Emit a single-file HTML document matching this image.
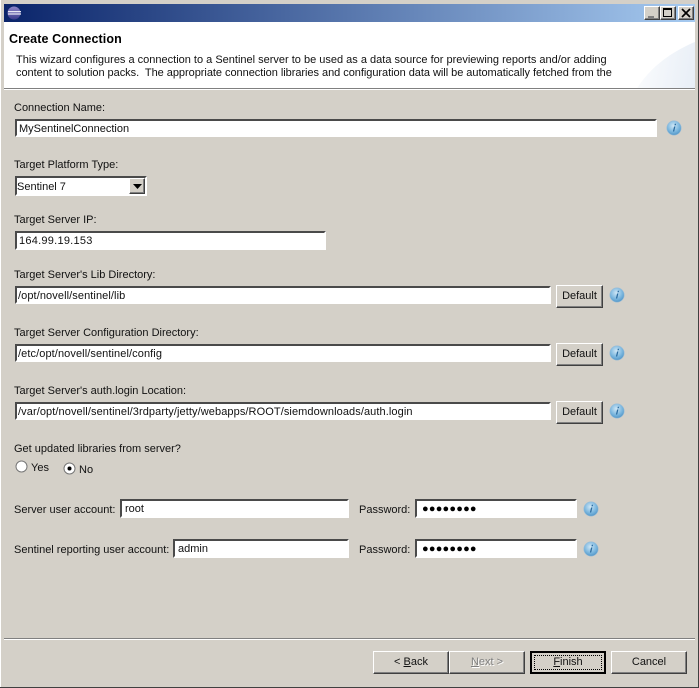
<!DOCTYPE html>
<html><head><meta charset="utf-8">
<style>
html,body{margin:0;padding:0}
body{width:699px;height:688px;position:relative;overflow:hidden;background:#d4d0c8;font-family:"Liberation Sans",sans-serif;font-size:11px;color:#111}
.a{position:absolute;white-space:nowrap}
.t{position:absolute;white-space:nowrap;line-height:14px;margin-top:1px}
.f{position:absolute;box-sizing:border-box;background:#fff;border:2px solid;border-color:#4a4a4a #fff #fff #4a4a4a;outline:0;line-height:17px;padding-left:2px;white-space:nowrap;overflow:hidden}
.b{position:absolute;box-sizing:border-box;background:#d4d0c8;border:1px solid;border-color:#fff #404040 #404040 #fff;box-shadow:inset -1px -1px 0 #808080;text-align:center;white-space:nowrap}
svg.i{position:absolute;width:16px;height:16px}
u{text-decoration:underline}
.p{font-size:11px;letter-spacing:.2px;color:#000;line-height:16px}
.w{letter-spacing:.09px}
</style></head><body>
<svg width="0" height="0" style="position:absolute"><defs>
<radialGradient id="g" cx="45%" cy="35%" r="70%"><stop offset="0" stop-color="#cfe6f5"/><stop offset=".6" stop-color="#7ab6de"/><stop offset="1" stop-color="#4a8fc2"/></radialGradient>
<symbol id="info" viewBox="0 0 16 16"><circle cx="8" cy="8" r="7.2" fill="url(#g)" stroke="#9cbdd6" stroke-width=".6"/><path d="M8.800 3.800h1.300l-.3 1.400H8.500zM8.100 6.500h1.300l-1.200 5H6.900z" fill="#2a6a9e"/></symbol>
<linearGradient id="sph" x1="0" y1="0" x2="0" y2="1"><stop offset="0" stop-color="#8d86c9"/><stop offset="1" stop-color="#3b3a8c"/></linearGradient>
</defs></svg>

<!-- window frame -->
<div class="a" style="left:0;top:0;width:699px;height:4px;background:#d4d0c8"></div>
<div class="a" style="left:0;top:0;width:1px;height:688px;background:#fff"></div>
<div class="a" style="left:698px;top:0;width:1px;height:688px;background:#404040"></div>
<div class="a" style="left:0;top:687px;width:699px;height:1px;background:#404040"></div>

<!-- title bar -->
<div class="a" style="left:4px;top:4px;width:691px;height:18px;background:linear-gradient(90deg,#0a246a,#a6caf0)"></div>
<svg class="a" style="left:6px;top:5px" width="16" height="16" viewBox="0 0 16 16"><circle cx="8" cy="8" r="6.5" fill="url(#sph)"/><path d="M2 6.600h13M2 9h13" stroke="#e8e8f4" stroke-width="1.200"/></svg>
<div class="b" style="left:644px;top:6px;width:16px;height:14px"><div class="a" style="left:3px;top:9px;width:6px;height:2px;background:#808080"></div></div>
<div class="b" style="left:660px;top:6px;width:16px;height:14px"><div class="a" style="left:2px;top:1px;width:9px;height:9px;border:1px solid #000;border-top-width:2px;box-sizing:border-box"></div></div>
<div class="b" style="left:678px;top:6px;width:16px;height:14px"><svg class="a" style="left:2px;top:1px" width="10" height="10" viewBox="0 0 10 10"><path d="M1 1l8 8M9 1l-8 8" stroke="#000" stroke-width="1.700"/></svg></div>

<!-- header -->
<div class="a" style="left:4px;top:22px;width:691px;height:66px;background:#fff;overflow:hidden">
<div class="a" style="left:622px;top:4px;width:300px;height:200px;border-radius:50%;background:linear-gradient(100deg,#fff,#e2eaf4 30%)"></div>
</div>
<div class="a" style="left:4px;top:88px;width:691px;height:1px;background:#808080"></div>
<div class="a" style="left:4px;top:89px;width:691px;height:1px;background:#fff"></div>
<div class="t" style="left:9px;top:31px;font-weight:bold;font-size:12.5px;letter-spacing:.1px;color:#000">Create Connection</div>
<div class="t" style="left:16px;top:52px">This wizard configures a connection to a Sentinel server to be used as a data source for previewing reports and/or adding</div>
<div class="t" style="left:16px;top:65px;letter-spacing:-.04px">content to solution packs.&nbsp; The appropriate connection libraries and configuration data will be automatically fetched from the</div>

<!-- form -->
<div class="t" style="left:14px;top:100px">Connection Name:</div>
<div class="f" style="left:15px;top:119px;width:642px;height:18px">MySentinelConnection</div>
<svg class="i" style="left:666px;top:120px"><use href="#info"/></svg>

<div class="t" style="left:14px;top:157px">Target Platform Type:</div>
<div class="f" style="left:15px;top:176px;width:132px;height:20px;padding-left:0;line-height:18px">Sentinel 7</div>
<div class="b" style="left:129px;top:178px;width:16px;height:16px"><svg class="a" style="left:3px;top:5px" width="9" height="5"><path d="M0 0h9L4.500 5z" fill="#000"/></svg></div>

<div class="t" style="left:14px;top:212px">Target Server IP:</div>
<div class="f" style="left:15px;top:231px;width:311px;height:19px;letter-spacing:.25px">164.99.19.153</div>

<div class="t" style="left:14px;top:267px">Target Server's Lib Directory:</div>
<div class="f w" style="left:15px;top:286px;width:536px;height:18px;padding-left:1px">/opt/novell/sentinel/lib</div>
<div class="b" style="left:556px;top:285px;width:47px;height:23px;line-height:21px">Default</div>
<svg class="i" style="left:609px;top:287px"><use href="#info"/></svg>

<div class="t" style="left:14px;top:325px">Target Server Configuration Directory:</div>
<div class="f w" style="left:15px;top:344px;width:536px;height:18px;padding-left:1px">/etc/opt/novell/sentinel/config</div>
<div class="b" style="left:556px;top:343px;width:47px;height:23px;line-height:21px">Default</div>
<svg class="i" style="left:609px;top:345px"><use href="#info"/></svg>

<div class="t" style="left:14px;top:383px">Target Server's auth.login Location:</div>
<div class="f w" style="left:15px;top:402px;width:536px;height:18px;padding-left:1px">/var/opt/novell/sentinel/3rdparty/jetty/webapps/ROOT/siemdownloads/auth.login</div>
<div class="b" style="left:556px;top:401px;width:47px;height:23px;line-height:21px">Default</div>
<svg class="i" style="left:609px;top:403px"><use href="#info"/></svg>

<div class="t" style="left:14px;top:441px">Get updated libraries from server?</div>
<svg class="a" style="left:15px;top:460px" width="13" height="13"><circle cx="6.500" cy="6.500" r="5.500" fill="#fff" stroke="#777"/></svg>
<div class="t" style="left:31px;top:460px">Yes</div>
<svg class="a" style="left:63px;top:462px" width="13" height="13"><circle cx="6.500" cy="6.500" r="5.500" fill="#fff" stroke="#777"/><circle cx="6.500" cy="6.500" r="2" fill="#000"/></svg>
<div class="t" style="left:79px;top:462px">No</div>

<div class="t" style="left:14px;top:502px">Server user account:</div>
<div class="f" style="left:120px;top:499px;width:229px;height:19px;padding-left:3px">root</div>
<div class="t" style="left:359px;top:502px">Password:</div>
<div class="f p" style="left:415px;top:499px;width:162px;height:19px;padding-left:5px">●●●●●●●●</div>
<svg class="i" style="left:583px;top:501px"><use href="#info"/></svg>

<div class="t" style="left:14px;top:542px">Sentinel reporting user account:</div>
<div class="f" style="left:173px;top:539px;width:176px;height:19px;padding-left:3px">admin</div>
<div class="t" style="left:359px;top:542px">Password:</div>
<div class="f p" style="left:415px;top:539px;width:162px;height:19px;padding-left:5px">●●●●●●●●</div>
<svg class="i" style="left:583px;top:541px"><use href="#info"/></svg>

<!-- footer -->
<div class="a" style="left:4px;top:638px;width:691px;height:1px;background:#808080"></div>
<div class="a" style="left:4px;top:639px;width:691px;height:1px;background:#fff"></div>
<div class="b" style="left:373px;top:651px;width:76px;height:23px;line-height:21px">&lt; <u>B</u>ack</div>
<div class="b" style="left:449px;top:651px;width:76px;height:23px;line-height:21px;color:#808080;text-shadow:1px 1px 0 #fff"><u>N</u>ext &gt;</div>
<div class="b" style="left:530px;top:651px;width:76px;height:23px;line-height:19px;border:2px solid #000;box-shadow:none"><div class="a" style="left:2px;top:2px;right:2px;bottom:2px;border:1px dotted #000"></div><u>F</u>inish</div>
<div class="b" style="left:611px;top:651px;width:76px;height:23px;line-height:21px">Cancel</div>
</body></html>
